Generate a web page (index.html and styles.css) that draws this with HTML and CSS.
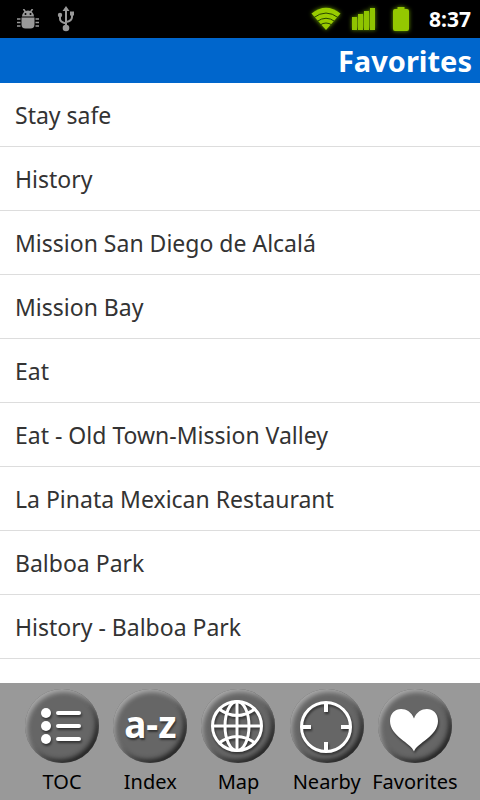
FILE: index.html
```html
<!DOCTYPE html>
<html lang="en">
<head>
<meta charset="utf-8">
<meta name="viewport" content="width=device-width, initial-scale=1">
<title>Favorites</title>
<link rel="stylesheet" href="styles.css">
</head>
<body>
<div class="status">
  <svg class="debug" width="22" height="20" viewBox="0 0 22 20" aria-hidden="true">
    <path d="M5 7.500a6 6 0 0 1 12 0zM4.500 8.500h13v7q0 4-4 4h-5q-4 0-4-4z" fill="#999"/>
    <path d="M6.500 0l2 3M15.500 0l-2 3M0 10h3.500M0 13.500h3.500M0 17h3.500M18.500 10H22M18.500 13.500H22M18.500 17H22" fill="none" stroke="#999" stroke-width="1.600"/>
    <circle cx="8.500" cy="5" r="1" fill="#000"/><circle cx="13.500" cy="5" r="1" fill="#000"/>
  </svg>
  <svg class="usb" width="18" height="26" viewBox="0 0 18 26" aria-hidden="true">
    <path d="M9 22V4M9 17.500Q3 16 3 13V9M9 16q6-1 6-5V7" fill="none" stroke="#999" stroke-width="2"/>
    <path d="M9 0l3.500 5h-7zM13 5.500h4v4h-4z" fill="#999"/>
    <circle cx="3" cy="9" r="2.200" fill="#999"/><circle cx="9" cy="22" r="3.300" fill="#999"/>
  </svg>
  <svg class="wifi" width="30" height="24" viewBox="0 0 30 24" aria-hidden="true">
    <path d="M0.500 6.500Q15-5 29.500 6.500L15 23z" fill="#9c0"/>
    <path d="M2.500 10.800q12.500-9.500 25 0M6 14.500q9-6.500 18 0M9 18q6-4 12 0" fill="none" stroke="#264400" stroke-width="1"/>
  </svg>
  <svg class="signal" width="24" height="22" viewBox="0 0 24 22" aria-hidden="true">
    <path d="M0 9h5v13H0zM6 6h5v16H6zM12 3h5v19h-5zM18 0h5v22h-5z" fill="#8fc400"/>
  </svg>
  <svg class="battery" width="18" height="24" viewBox="0 0 18 24" aria-hidden="true">
    <path d="M5.500 0h7v2H15q2 0 2 2v18q0 2-2 2H3q-2 0-2-2V4q0-2 2-2h2.500z" fill="#94c800"/>
  </svg>
  <time class="clock">8:37</time>
</div>
<header class="title"><h1>Favorites</h1></header>
<main>
  <ul class="list">
    <li><a href="#">Stay safe</a></li>
    <li><a href="#">History</a></li>
    <li><a href="#">Mission San Diego de Alcalá</a></li>
    <li><a href="#">Mission Bay</a></li>
    <li><a href="#">Eat</a></li>
    <li><a href="#">Eat - Old Town-Mission Valley</a></li>
    <li><a href="#">La Pinata Mexican Restaurant</a></li>
    <li><a href="#">Balboa Park</a></li>
    <li><a href="#">History - Balboa Park</a></li>
  </ul>
</main>
<nav class="tabs">
  <a href="#"><span class="disc"><svg width="72" height="72" viewBox="0 0 72 72" aria-hidden="true">
    <g fill="#fff"><circle cx="20" cy="23" r="5"/><circle cx="20" cy="36" r="5"/><circle cx="20" cy="49" r="5"/></g>
    <path d="M32 23h21M32 36h21M32 49h21" stroke="#fff" stroke-width="4" stroke-linecap="round"/>
  </svg></span>TOC</a>
  <a href="#"><span class="disc az">a-z</span>Index</a>
  <a href="#"><span class="disc"><svg width="72" height="72" viewBox="0 0 72 72" aria-hidden="true">
    <g fill="none" stroke="#fff" stroke-width="3"><circle cx="35" cy="36" r="24.500"/><ellipse cx="35" cy="36" rx="12" ry="24.500"/>
    <path d="M35 11v50M10 36h50M17 19q18 13 36 0M17 53q18-13 36 0"/></g>
  </svg></span>Map</a>
  <a href="#"><span class="disc"><svg width="72" height="72" viewBox="0 0 72 72" aria-hidden="true">
    <circle cx="35" cy="37" r="24.500" fill="none" stroke="#fff" stroke-width="3"/>
    <path d="M35 13v9M35 52v9M11 37h9M50 37h9" stroke="#fff" stroke-width="4"/>
  </svg></span>Nearby</a>
  <a href="#" aria-current="page"><span class="disc"><svg width="72" height="72" viewBox="0 0 72 72" aria-hidden="true">
    <path d="M35 61.500C32 53 11 46 11 31C11 16 30 15 35 28.500C40 15 59 16 59 31C59 46 38 53 35 61.500z" fill="#fff"/>
  </svg></span>Favorites</a>
</nav>
</body>
</html>
```
FILE: styles.css
```css
* {
  box-sizing: border-box;
}

body {
  margin: 0;
  min-height: 100vh;
  display: flex;
  flex-direction: column;
  background: #fff;
  color: #333;
  font-family: "Noto Sans", "Open Sans", sans-serif;
}

a {
  color: inherit;
  text-decoration: none;
}

.status {
  display: flex;
  align-items: center;
  height: 38px;
  padding: 0 9px 0 17px;
  background: #000;
  color: #fff;
}

.usb {
  margin-left: 18px;
}

.wifi {
  margin-left: auto;
}

.signal {
  margin-left: 11px;
}

.battery {
  margin-left: 16px;
}

.wifi,
.signal,
.battery {
  filter: drop-shadow(0 0 2px #6a9a00);
}

.clock {
  margin-left: 19px;
  font-size: 21px;
  font-weight: 700;
}

.title {
  height: 45px;
  padding: 0 8px;
  background: #06c;
  color: #fff;
  text-align: right;
}

.title h1 {
  margin: 0;
  font-size: 29px;
  line-height: 45px;
}

main {
  flex: 1;
}

.list {
  margin: 0;
  padding: 0;
  list-style: none;
}

.list a {
  display: block;
  height: 64px;
  padding: 0 15px;
  border-bottom: 1px solid #ddd;
  font-size: 23px;
  line-height: 64px;
}

.tabs {
  display: grid;
  grid-template-columns: repeat(5, minmax(0, 1fr));
  padding: 6px 21px 4px 18px;
  background: #999;
  color: #000;
}

.tabs a {
  display: flex;
  flex-direction: column;
  align-items: center;
  gap: 4px;
  font-size: 20px;
  line-height: 29px;
  white-space: nowrap;
}

.disc {
  display: flex;
  align-items: center;
  justify-content: center;
  width: 74px;
  height: 74px;
  border-radius: 50%;
  background: #666;
  box-shadow: inset 2px 3px 5px #aaa, inset -3px -3px 5px #222;
}

.disc svg {
  filter: drop-shadow(1px 2px 1px #333);
}

.az {
  color: #fff;
  font-size: 37px;
  font-weight: 700;
  line-height: 74px;
  padding-bottom: 4px;
  text-shadow: 1px 2px 2px #333;
}
```
